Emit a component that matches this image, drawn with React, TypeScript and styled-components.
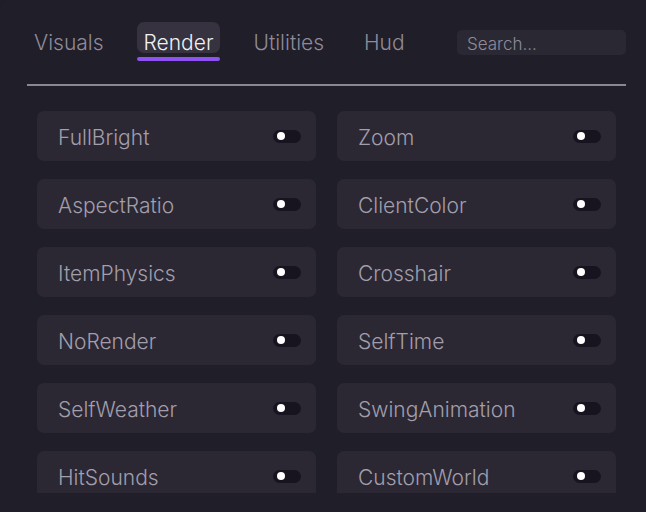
import { createGlobalStyle } from "styled-components";
import styled from "styled-components";

const GlobalStyle = createGlobalStyle`
	html, body {
		margin: 0;
		padding: 0;
		background: #1f1d27;
		font-family: Inter, "Noto Sans", sans-serif;
	}
`;

const Panel = styled.div`
	width: 646px;
	height: 512px;
	box-sizing: border-box;
	background: #201e28;
	border-top-left-radius: 10px;
	padding: 22px 20px 0 27px;
	overflow: hidden;
`;

const Header = styled.div`
	display: flex;
	align-items: flex-start;
	height: 62px;
`;

const Tabs = styled.nav`
	display: flex;
	gap: 26px;
	flex: 1;
`;

const Tab = styled.div<{ $active?: boolean }>`
	position: relative;
	height: 31px;
	box-sizing: border-box;
	padding: 9px 7px 0;
	border-radius: 7px;
	display: flex;
	align-items: center;
	font-size: 21px;
	font-weight: 300;
	color: ${(p) => (p.$active ? "#f1f0f5" : "#8f8b99")};
	background: ${(p) => (p.$active ? "#36323f" : "transparent")};

	&::after {
		content: "";
		display: ${(p) => (p.$active ? "block" : "none")};
		position: absolute;
		left: 0;
		right: 0;
		bottom: -8px;
		height: 4px;
		border-radius: 2px;
		background: #8f52f2;
	}
`;

const Search = styled.input`
	margin-top: 8px;
	width: 169px;
	height: 25px;
	box-sizing: border-box;
	border: none;
	outline: none;
	border-radius: 5px;
	background: #2a2833;
	padding: 2px 10px 0;
	font-family: Inter, "Noto Sans", sans-serif;
	font-size: 17px;
	font-weight: 300;
	color: #d0cdd8;

	&::placeholder {
		color: #8f8b99;
	}
`;

const Divider = styled.div`
	height: 2px;
	width: 599px;
	background: #8a8694;
`;

const Scroll = styled.div`
	margin-top: 25px;
	margin-left: 10px;
	height: 382px;
	overflow: hidden;
`;

const Grid = styled.div`
	display: grid;
	grid-template-columns: 279px 279px;
	column-gap: 21px;
	row-gap: 18px;
`;

const Card = styled.div`
	height: 50px;
	box-sizing: border-box;
	border-radius: 7px;
	background: #2b2834;
	padding: 0 15px 0 21px;
	display: flex;
	align-items: center;
	justify-content: space-between;
`;

const Label = styled.span`
	font-size: 21px;
	font-weight: 300;
	color: #a29eac;
	margin-top: 2px;
`;

const Toggle = styled.div<{ $on?: boolean }>`
	width: 28px;
	height: 13px;
	border-radius: 7px;
	background: #17141f;
	position: relative;

	&::before {
		content: "";
		position: absolute;
		top: 2.5px;
		left: ${(p) => (p.$on ? "16px" : "4px")};
		width: 8px;
		height: 8px;
		border-radius: 50%;
		background: #ffffff;
	}
`;

const tabs = ["Visuals", "Render", "Utilities", "Hud"];

const modules = [
	"FullBright",
	"Zoom",
	"AspectRatio",
	"ClientColor",
	"ItemPhysics",
	"Crosshair",
	"NoRender",
	"SelfTime",
	"SelfWeather",
	"SwingAnimation",
	"HitSounds",
	"CustomWorld",
];

export default function App() {
	return (
		<>
			<GlobalStyle />
			<Panel>
				<Header>
					<Tabs>
						{tabs.map((t) => (
							<Tab key={t} $active={t === "Render"}>
								{t}
							</Tab>
						))}
					</Tabs>
					<Search placeholder="Search..." />
				</Header>
				<Divider />
				<Scroll>
					<Grid>
						{modules.map((m) => (
							<Card key={m}>
								<Label>{m}</Label>
								<Toggle />
							</Card>
						))}
					</Grid>
				</Scroll>
			</Panel>
		</>
	);
}
